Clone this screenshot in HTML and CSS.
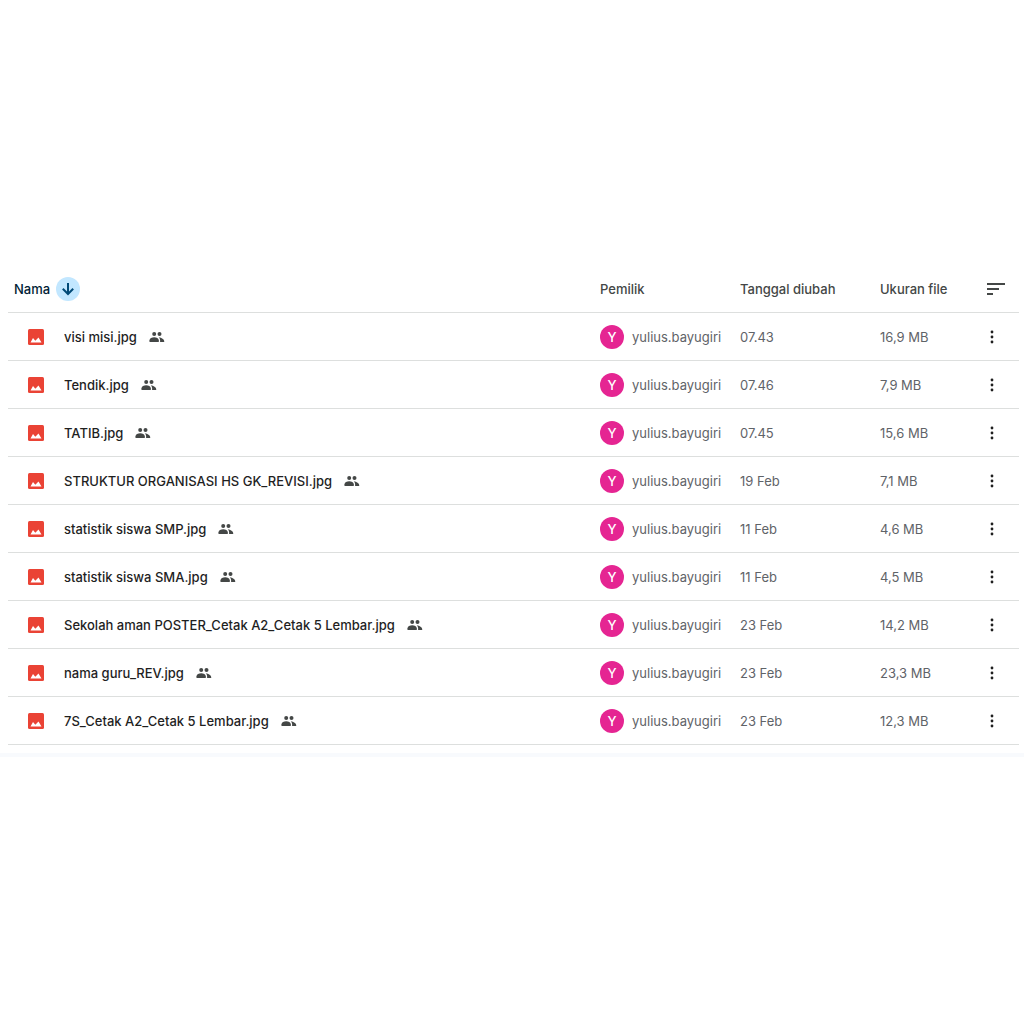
FILE: index.html
```html
<!DOCTYPE html>
<html lang="id">
<head>
    <meta charset="UTF-8">
    <meta name="viewport" content="width=device-width, initial-scale=1.0">
    <title>Drive</title>
    <link rel="stylesheet" href="styles.css">
</head>
<body>

    <!-- Shared icons -->
    <svg class="icon-defs" aria-hidden="true">
        <symbol id="icon-image" viewBox="0 0 16 16">
            <rect width="16" height="16" rx="1.5" fill="#ea4335"/>
            <path d="M2.500 13.500 5 9l2.300 2.800L10.500 8.500l3 5z" fill="#fff"/>
        </symbol>
        <symbol id="icon-shared" viewBox="0 0 16 12">
            <circle cx="5.200" cy="3" r="2"/>
            <path d="M.5 11V9.300C.5 7.200 3 6.200 5.200 6.200s4.600 1 4.600 3.100V11z"/>
            <circle cx="10.500" cy="3" r="2"/>
            <path d="M9.800 6.200c2.900.6 5.400 2 5.400 3.700V11h-4.100V9.300c0-1.200-.4-2.200-1.300-3.100z"/>
        </symbol>
        <symbol id="icon-more" viewBox="0 0 24 24">
            <circle cx="12" cy="7" r="1.400"/>
            <circle cx="12" cy="12" r="1.400"/>
            <circle cx="12" cy="17" r="1.400"/>
        </symbol>
    </svg>

    <main class="file-list">
        <table class="file-table">
            <thead>
                <tr>
                    <th class="col-name" scope="col">
                        <div class="name-head">
                            Nama
                            <button type="button" class="sort-arrow" aria-label="Balik urutan">
                                <svg width="16" height="16" viewBox="0 0 16 16" fill="none" stroke="#004a77" stroke-width="2"><path d="M8 2v11M2.800 7.800 8 13l5.200-5.200"/></svg>
                            </button>
                        </div>
                    </th>
                    <th class="col-owner" scope="col">Pemilik</th>
                    <th class="col-date" scope="col">Tanggal diubah</th>
                    <th class="col-size" scope="col">Ukuran file</th>
                    <th class="col-action">
                        <button type="button" class="icon-button" aria-label="Opsi urutan">
                            <svg width="24" height="24" viewBox="0 0 24 24"><path d="M3 6h18v2H3zM3 11h12v2H3zM3 16h6v2H3z"/></svg>
                        </button>
                    </th>
                </tr>
            </thead>
            <tbody id="fileRows"></tbody>
        </table>
    </main>

    <script src="script.js"></script>
</body>
</html>
```

FILE: styles.css
```css
/* --- General Setup --- */
:root {
    --text-color: #1f1f1f;
    --muted-color: #5f6368;
    --head-color: #444746;
    --line-color: #dddfde;
    --owner-color: #e52592;
}

* {
    box-sizing: border-box;
}

body {
    margin: 0;
    padding-bottom: 2px;
    min-height: 100vh;
    display: flex;
    flex-direction: column;
    justify-content: center;
    background-color: #fff;
    color: var(--text-color);
    font-family: Inter, Roboto, sans-serif;
    font-size: 13px;
    line-height: 20px;
}

.icon-defs {
    position: absolute;
    width: 0;
    height: 0;
}

svg {
    display: block;
    flex-shrink: 0;
}

/* --- File List --- */
.file-list {
    padding: 0 5px 8px 8px;
    border-bottom: 4px solid #f8fafd;
}

.file-table {
    width: 100%;
    table-layout: fixed;
    border-collapse: separate;
    border-spacing: 0;
}

th, td {
    height: 48px;
    padding: 0;
    border-bottom: 1px solid var(--line-color);
    text-align: left;
    vertical-align: middle;
    white-space: nowrap;
}

th {
    color: var(--head-color);
    font-weight: 500;
}

td {
    color: var(--muted-color);
}

.col-owner, .col-date {
    width: 140px;
}

.col-size {
    width: 96px;
}

.col-action {
    width: 43px;
    padding-left: 8px;
}

/* --- Name Column --- */
.name-head {
    display: flex;
    align-items: center;
    gap: 6px;
    padding-left: 6px;
    color: #001d35;
}

.name-cell {
    display: flex;
    align-items: center;
    padding-left: 20px;
    color: var(--text-color);
    font-weight: 500;
}

.file-name {
    margin-left: 20px;
    overflow: hidden;
    text-overflow: ellipsis;
}

.shared-icon {
    margin: 0 20px 0 12px;
    fill: var(--head-color);
}

/* --- Owner Column --- */
.owner-cell {
    display: flex;
    align-items: center;
    gap: 8px;
}

.avatar {
    width: 24px;
    height: 24px;
    border-radius: 50%;
    background-color: var(--owner-color);
    color: #fff;
    font-weight: 500;
    line-height: 24px;
    text-align: center;
}

/* --- Buttons --- */
button {
    display: block;
    width: 24px;
    height: 24px;
    padding: 0;
    border: none;
    border-radius: 50%;
    background: none;
    cursor: pointer;
}

.sort-arrow {
    padding: 4px;
    background-color: #c2e7ff;
}

.icon-button {
    fill: var(--head-color);
}

td .icon-button {
    fill: var(--text-color);
}

.action-cell {
    padding-left: 4px;
}
```

FILE: script.js
```javascript
const files = [
    { name: 'visi misi.jpg', date: '07.43', size: '16,9 MB' },
    { name: 'Tendik.jpg', date: '07.46', size: '7,9 MB' },
    { name: 'TATIB.jpg', date: '07.45', size: '15,6 MB' },
    { name: 'STRUKTUR ORGANISASI HS GK_REVISI.jpg', date: '19 Feb', size: '7,1 MB' },
    { name: 'statistik siswa SMP.jpg', date: '11 Feb', size: '4,6 MB' },
    { name: 'statistik siswa SMA.jpg', date: '11 Feb', size: '4,5 MB' },
    { name: 'Sekolah aman POSTER_Cetak A2_Cetak 5 Lembar.jpg', date: '23 Feb', size: '14,2 MB' },
    { name: 'nama guru_REV.jpg', date: '23 Feb', size: '23,3 MB' },
    { name: '7S_Cetak A2_Cetak 5 Lembar.jpg', date: '23 Feb', size: '12,3 MB' }
];

document.getElementById('fileRows').innerHTML = files.map(file => `
    <tr>
        <td>
            <div class="name-cell">
                <svg width="16" height="16"><use href="#icon-image"/></svg>
                <span class="file-name">${file.name}</span>
                <svg class="shared-icon" width="16" height="12"><use href="#icon-shared"/></svg>
            </div>
        </td>
        <td>
            <div class="owner-cell">
                <span class="avatar">Y</span>
                <span>yulius.bayugiri</span>
            </div>
        </td>
        <td>${file.date}</td>
        <td>${file.size}</td>
        <td class="action-cell">
            <button type="button" class="icon-button" aria-label="Tindakan lainnya">
                <svg width="24" height="24"><use href="#icon-more"/></svg>
            </button>
        </td>
    </tr>
`).join('');
```
